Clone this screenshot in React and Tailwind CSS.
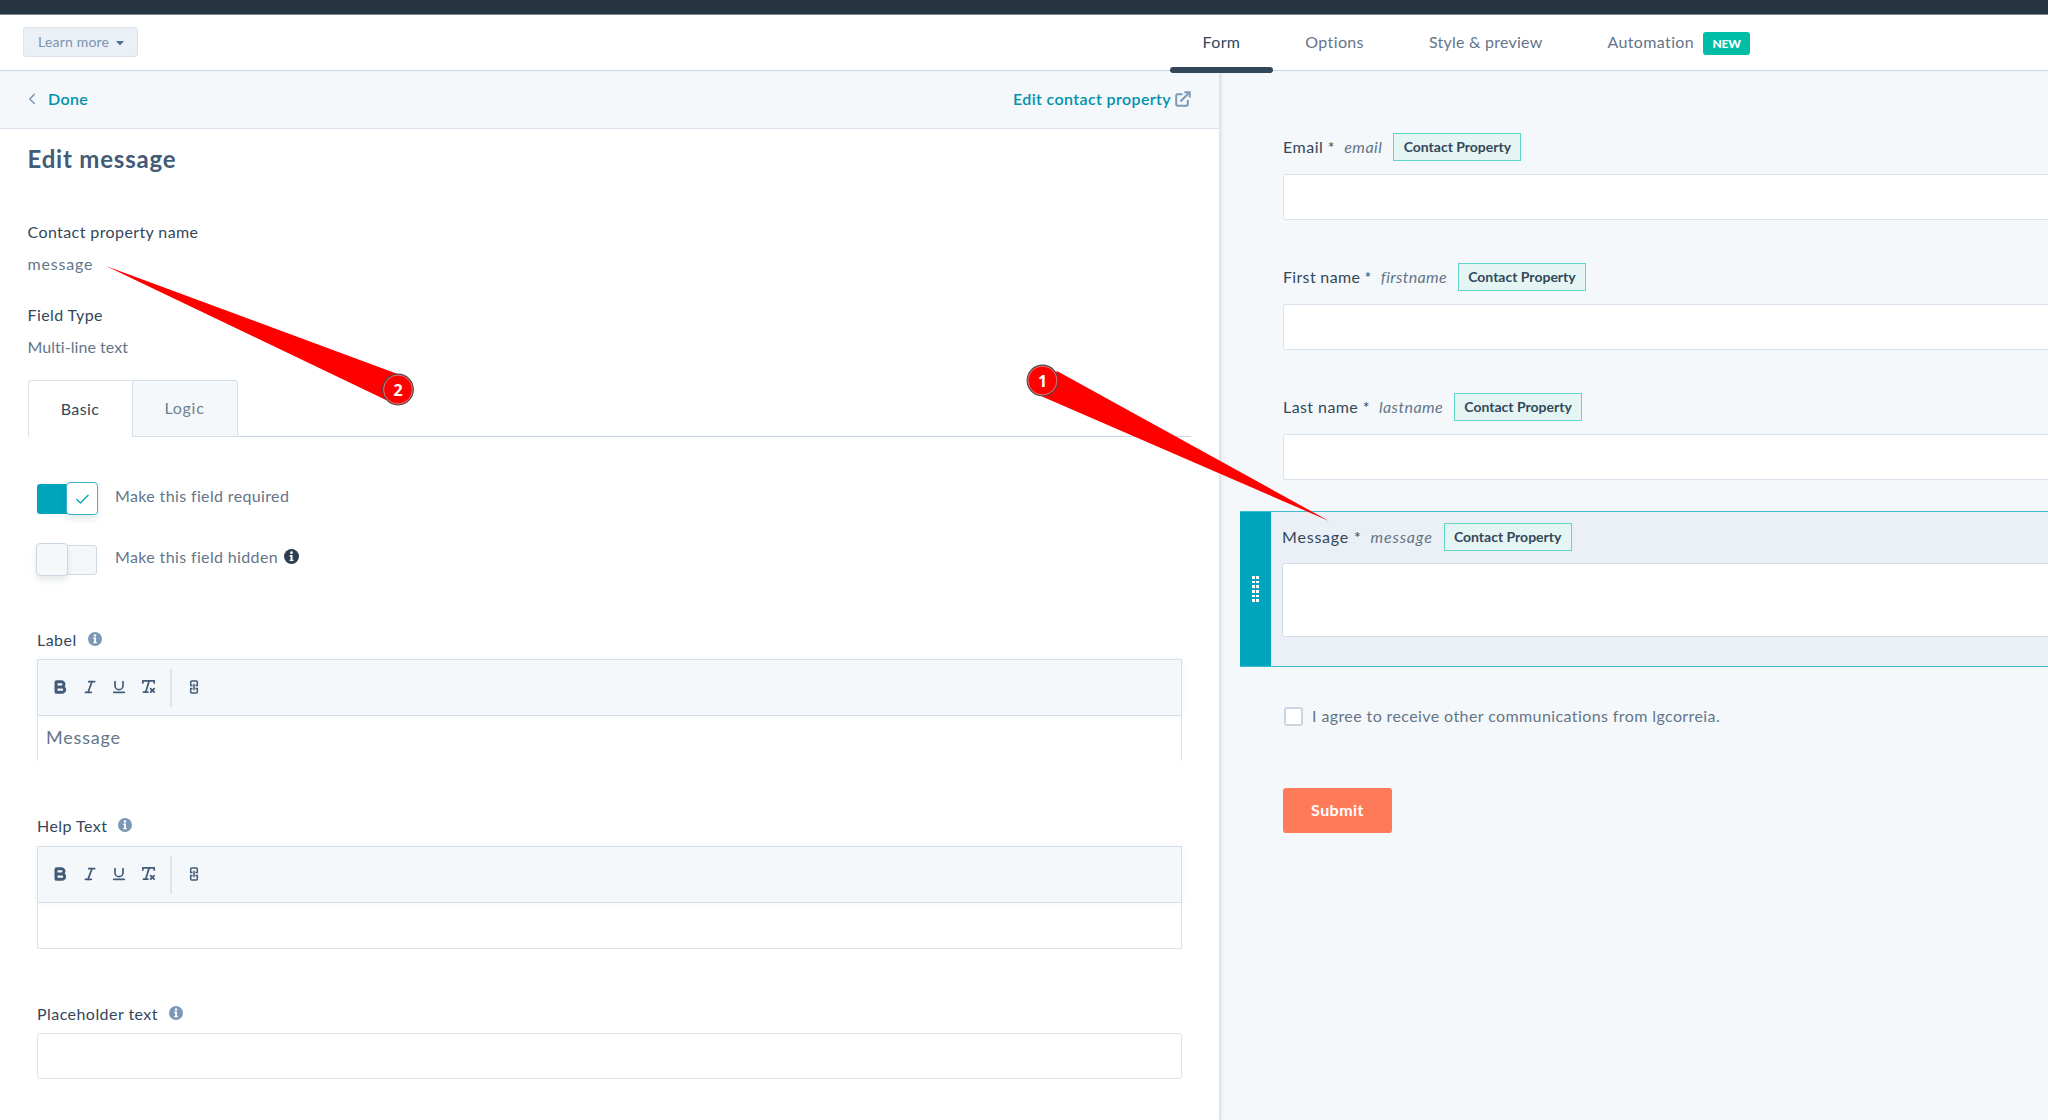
import { Bold, Check, ChevronLeft, Italic, RemoveFormatting, Underline } from 'lucide-react'

const formFields = [
  { label: 'Email', name: 'email', tracking: 'tracking-[0.5px]' },
  { label: 'First name', name: 'firstname', tracking: 'tracking-[0.33px]' },
  { label: 'Last name', name: 'lastname', tracking: 'tracking-[0.42px]' },
]

function InfoIcon({ className }) {
  return (
    <svg viewBox="0 0 16 16" className={className}>
      <circle cx="8" cy="8" r="8" fill="currentColor" />
      <circle cx="8" cy="3.9" r="1.4" fill="#fff" />
      <path d="M6 6.4h3.1v5h1v1.5H6v-1.5h1v-3.5H6z" fill="#fff" />
    </svg>
  )
}

function ExternalIcon() {
  return (
    <svg viewBox="0 0 16 16" className="w-4 h-4 text-[#7c98b6]" fill="none" stroke="currentColor" strokeWidth="2">
      <path d="M7.5 3.2H2.6Q1.2 3.2 1.2 4.6v8.8q0 1.4 1.4 1.4h8.8q1.4 0 1.4-1.4V9" />
      <path d="M5.5 10.5 13.5 2.3" />
      <path d="M9.3 1.2h5.4v5.4" />
    </svg>
  )
}

function LinkIcon() {
  return (
    <svg viewBox="0 0 10 14" className="w-[10px] h-[14px]" fill="none" stroke="currentColor" strokeWidth="1.5">
      <path d="M3.6 5.6H1.7V2q0-1 1-1h4.6q1 0 1 1v3.6H6.4" />
      <path d="M3.6 8.4H1.7V12q0 1 1 1h4.6q1 0 1-1V8.4H6.4" />
      <path d="M5 3.8v6.4" />
    </svg>
  )
}

function Header() {
  return (
    <header className="relative flex h-[56px] border-b border-[#cbd6e2] bg-white">
      <button className="ml-[23px] mt-3 flex h-[30px] w-[115px] items-center gap-[7px] rounded-[3px] border border-[#dbe3ec] bg-[#eaf0f6] pl-[14px] pb-px text-sm tracking-[0.2px] text-[#7c93ad]">
        Learn more
        <svg viewBox="0 0 8 5" className="mt-[3px] h-[5px] w-[8px]"><path d="M0 0h8L4 4.6z" fill="#506e91" /></svg>
      </button>
      <nav className="ml-[1032px] flex tracking-[0.36px] text-[#64758a]">
        <div className="relative px-[32.5px] pt-[14.5px] text-[#33475b]">
          Form
          <span className="absolute -bottom-[3px] left-0 h-[6px] w-full rounded-[3px] bg-[#33475b]" />
        </div>
        <div className="px-[32.5px] pt-[14.5px]">Options</div>
        <div className="px-[32.5px] pt-[14.5px] tracking-[0.25px]">Style &amp; preview</div>
        <div className="flex pl-[32.5px] pt-[14.5px]">
          Automation
          <span className="ml-[9px] mt-[2.5px] flex h-[23px] w-[47px] items-center justify-center rounded-[3px] bg-[#00bda5] text-xs font-black tracking-[-0.2px] text-white">NEW</span>
        </div>
      </nav>
    </header>
  )
}

function Toggle({ on }) {
  return on ? (
    <span className="flex h-[33px] w-[62px] items-center">
      <span className="ml-px h-[30px] w-[31px] rounded-l-[3px] bg-[#00a4bd]" />
      <span className="-ml-[2px] flex h-[33px] w-[32px] items-center justify-center rounded-[4px] border border-[#33b6ca] bg-white pt-px text-[#00a4bd] shadow-[0_4px_6px_rgba(45,62,80,0.12)]">
        <Check size={17} strokeWidth={1.8} />
      </span>
    </span>
  ) : (
    <span className="flex h-[33px] w-[62px] items-center">
      <span className="z-10 h-[33px] w-[32px] rounded-[4px] border border-[#cbd6e2] bg-[#f5f8fa] shadow-[0_4px_6px_rgba(45,62,80,0.12)]" />
      <span className="-ml-[2px] h-[30px] w-[31px] rounded-r-[3px] border border-[#cfd9e5] bg-[#f5f8fa]" />
    </span>
  )
}

function FieldLabel({ children }) {
  return (
    <div className="flex h-6 items-center gap-[11px]">
      <span className="tracking-[0.45px] text-[#33475b]">{children}</span>
      <InfoIcon className="mb-[2px] h-[14px] w-[14px] text-[#7c98b6]" />
    </div>
  )
}

function Toolbar() {
  return (
    <div className="flex h-[57px] items-center border border-[#d6dfe9] bg-[#f5f8fa] pl-[14px] pb-[2px] text-[#425b76] shadow-[0_0_6px_rgba(45,62,80,0.06)]">
      <Bold size={16} strokeWidth={4.5} />
      <Italic size={16} strokeWidth={2.5} className="ml-[13.5px]" />
      <Underline size={16} strokeWidth={2.5} className="ml-[13.5px]" />
      <RemoveFormatting size={17} strokeWidth={2.5} className="ml-[13px]" />
      <span className="ml-[13px] mt-[2px] h-[38px] w-[2px] bg-[#dfe3eb]" />
      <span className="ml-[17px]"><LinkIcon /></span>
    </div>
  )
}

function EditPanel() {
  return (
    <section className="w-[1221px] shrink-0 border-r-2 border-[#dfe3eb] bg-white shadow-[1px_0_3px_rgba(45,62,80,0.08)] tracking-[0.4px]">
      <div className="flex h-[58px] items-center border-b border-[#dbe3ec] bg-[#f5f8fa] pb-[2px] font-semibold tracking-[0.38px] text-[#0091ae]">
        <ChevronLeft size={18} strokeWidth={2.2} className="ml-[23px] text-[#7c98b6]" />
        <span className="ml-[7px]">Done</span>
        <span className="ml-auto">Edit contact property</span>
        <span className="ml-1 mr-[28px]"><ExternalIcon /></span>
      </div>

      <div className="pl-[27.5px] pr-7">
        <h1 className="mt-[14px] text-2xl font-bold tracking-[0.8px] text-[#425b76]">Edit message</h1>
        <p className="mt-[45px] text-[#33475b]">Contact property name</p>
        <p className="mt-2 text-[#64758a] tracking-[0.8px]">message</p>
        <p className="mt-[27px] text-[#33475b]">Field Type</p>
        <p className="mt-2 text-[#64758a] tracking-[0.05px]">Multi-line text</p>

        {/* Tabs */}
        <div className="mt-[21px] flex h-[57px]">
          <div className="flex w-[104px] items-center justify-center rounded-tl-[3px] border-l border-t border-[#dbe3ec] pb-px text-[#33475b]">Basic</div>
          <div className="flex w-[106px] items-center justify-center rounded-tr-[3px] border border-[#d6dfe9] bg-[#f5f8fa] pb-px tracking-[0.7px] text-[#6f8091]">Logic</div>
          <div className="flex-1 border-b border-[#c5d3e2]" />
        </div>
      </div>

      <div className="pl-9 pr-[37px]">
        <div className="mt-[45px] flex gap-[17px]">
          <Toggle on />
          <span className="mt-[2px] text-[#64758a] tracking-[0.36px]">Make this field required</span>
        </div>
        <div className="mt-[28px] flex gap-[17px]">
          <Toggle />
          <span className="mt-[2px] text-[#64758a] tracking-[0.36px]">Make this field hidden</span>
          <InfoIcon className="-ml-[11px] mt-[6px] h-[15px] w-[15px] text-[#2d3e50]" />
        </div>

        <div className="ml-px">
          <div className="mt-[52px]"><FieldLabel>Label</FieldLabel></div>
          <div className="mt-[7px] h-[102px]">
            <Toolbar />
            <div className="h-[45px] border-x border-[#dfe3eb] pl-2 pt-[7px] text-lg leading-7 tracking-[0.8px] text-[#64758a]">Message</div>
          </div>

          <div className="mt-[53px]"><FieldLabel>Help Text</FieldLabel></div>
          <div className="mt-[8px]">
            <Toolbar />
            <div className="h-[46px] border-x border-b border-[#dbe3ec]" />
          </div>

          <div className="mt-[53px]"><FieldLabel>Placeholder text</FieldLabel></div>
          <div className="mt-[7px] h-[46px] rounded-[3px] border border-[#dbe3ec]" />
        </div>
      </div>
    </section>
  )
}

function PropertyLabel({ label, name, tracking }) {
  return (
    <div className="flex h-7 items-center">
      <span className={`${tracking} text-[#33475b]`}>{label} *</span>
      <span className={`ml-[9px] ${tracking} italic text-[#64758a]`}>{name}</span>
      <span className="ml-[11px] flex h-7 w-32 items-center justify-center border border-[#5fd6c6] bg-[#e5f5f3] pb-px text-sm font-bold text-[#33475b]">Contact Property</span>
    </div>
  )
}

function FormPreview() {
  return (
    <section className="flex-1 overflow-hidden pl-[19px] pt-[62px]">
      {formFields.map(f => (
        <div key={f.name} className="mb-[43px] ml-[43px]">
          <PropertyLabel {...f} />
          <div className="mt-[13px] h-[46px] w-[900px] rounded-[3px] border border-[#dbe3ec] bg-white" />
        </div>
      ))}

      {/* Selected field */}
      <div className="-mt-3 flex h-[156px] w-[900px] border-y border-[#40bccf] bg-[#eaf0f6]">
        <div className="flex w-[31px] shrink-0 items-center justify-center bg-[#00a4bd] pr-px">
          <div className="grid grid-cols-2 gap-x-[1px] gap-y-[2px]">
            {Array.from({ length: 12 }, (_, i) => <span key={i} className="h-[2.6px] w-[3px] bg-white" />)}
          </div>
        </div>
        <div className="ml-[11px] shrink-0 pt-[11px]">
          <PropertyLabel label="Message" name="message" tracking="tracking-[0.8px]" />
          <div className="mt-[12px] h-[74px] w-[900px] rounded-[3px] border border-[#d3dde8] bg-white" />
        </div>
      </div>

      <div className="ml-[43px] mt-[37px] flex items-center">
        <span className="ml-px mt-px h-[19px] w-[19px] rounded-[3px] border-2 border-[#cbd6e2] bg-white" />
        <span className="ml-[9px] tracking-[0.4px] text-[#64758a]">I agree to receive other communications from lgcorreia.</span>
      </div>
      <button className="ml-[43px] mt-[60px] flex h-[45px] w-[109px] items-center justify-center rounded-[3px] bg-[#ff7a59] pb-px font-bold tracking-[0.45px] text-white">Submit</button>
    </section>
  )
}

function Callouts() {
  return (
    <svg className="absolute inset-0" width="2048" height="1120" viewBox="0 0 2048 1120">
      <path d="M106 266 399 374.500 386 400z" fill="#f00" />
      <path d="M1329 521 1057 371 1042 396.500z" fill="#f00" />
      {[[398, 389.500, 2], [1042.500, 380.500, 1]].map(([x, y, n]) => (
        <g key={n}>
          <circle cx={x} cy={y} r="15.300" fill="#f00" stroke="#4a4a4a" strokeWidth="1.200" />
          <circle cx={x} cy={y} r="14.400" fill="none" stroke="#d9a0a0" strokeWidth="0.700" />
          <text x={x} y={y + 6} textAnchor="middle" className="fill-white font-['Open_Sans'] text-[16px] font-bold">{n}</text>
        </g>
      ))}
    </svg>
  )
}

export default function App() {
  return (
    <div className="relative flex h-[1120px] w-[2048px] flex-col overflow-hidden bg-[#f5f8fa] font-[Lato,sans-serif] text-base leading-6">
      <div className="h-[15px] border-b border-[#7d8792] bg-[#253342]" />
      <Header />
      <main className="flex flex-1">
        <EditPanel />
        <FormPreview />
      </main>
      <Callouts />
    </div>
  )
}
